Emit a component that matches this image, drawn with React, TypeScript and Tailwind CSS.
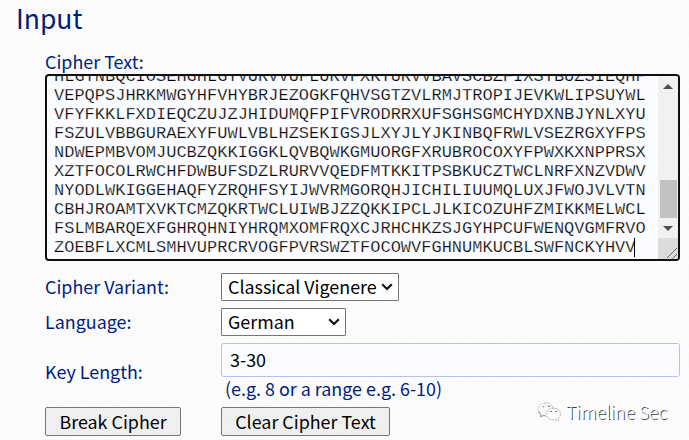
import React from "react";

const CIPHER_LINES = [
  "HLGTNBQCIOSEHGHLGTVURVVUFLURVFXKTURVVBAVSCBZFIXSTBUZSIEQHF",
  "VEPQPSJHRKMWGYHFVHYBRJEZOGKFQHVSGTZVLRMJTROPIJEVKWLIPSUYWL",
  "VFYFKKLFXDIEQCZUJZJHIDUMQFPIFVRODRRXUFSGHSGMCHYDXNBJYNLXYU",
  "FSZULVBBGURAEXYFUWLVBLHZSEKIGSJLXYJLYJKINBQFRWLVSEZRGXYFPS",
  "NDWEPMBVOMJUCBZQKKIGGKLQVBQWKGMUORGFXRUBROCOXYFPWXKXNPPRSX",
  "XZTFOCOLRWCHFDWBUFSDZLRURVVQEDFMTKKITPSBKUCZTWCLNRFXNZVDWV",
  "NYODLWKIGGEHAQFYZRQHFSYIJWVRMGORQHJICHILIUUMQLUXJFWOJVLVTN",
  "CBHJROAMTXVKTCMZQKRTWCLUIWBJZZQKKIPCLJLKICOZUHFZMIKKMELWCL",
  "FSLMBARQEXFGHRQHNIYHRQMXOMFRQXCJRHCHKZSJGYHPCUFWENQVGMFRVO",
  "ZOEBFLXCMLSMHVUPRCRVOGFPVRSWZTFOCOWVFGHNUMKUCBLSWFNCKYHVV",
];

function Chevron() {
  return (
    <svg width="12" height="8" viewBox="0 0 12 8" fill="none" className="shrink-0">
      <path d="M1.2 1.3 6 6l4.8-4.7" stroke="#111" strokeWidth="2.2" />
    </svg>
  );
}

function SelectBox({ label, width }: { label: string; width: string }) {
  return (
    <div className={`flex h-7 items-center justify-between rounded-[1px] border border-[#767676] bg-white pr-[5px] pl-1.5 whitespace-nowrap text-black ${width}`}>
      <span className="pb-0.5">{label}</span>
      <Chevron />
    </div>
  );
}

function Scrollbar() {
  return (
    <div className="flex w-5 shrink-0 flex-col bg-[#f1f1f1]">
      <div className="flex h-[21px] items-center justify-center">
        <svg width="10" height="5" viewBox="0 0 10 5"><path d="M0 5 5 0l5 5z" fill="#505050" /></svg>
      </div>
      <div className="flex-1" />
      <div className="mr-px ml-0.5 h-[38px] bg-[#c1c1c1]" />
      <div className="flex h-5 items-center justify-center">
        <svg width="10" height="5" viewBox="0 0 10 5"><path d="M0 0h10L5 5z" fill="#505050" /></svg>
      </div>
      <div className="flex h-[21px] items-end justify-end bg-[#dcdcdc]">
        <svg width="12" height="12" viewBox="0 0 12 12" stroke="#666" fill="none">
          <path d="M1 11 11 1M6.5 11.5l4.5-4.5" />
        </svg>
      </div>
    </div>
  );
}

function Watermark() {
  return (
    <div className="flex items-center pb-[19px]">
      <svg width="25" height="21" viewBox="0 0 26 22" fill="none" stroke="#a0a0a0" strokeWidth="0.8">
        <path d="M9 1C4.500 1 1 4 1 7.800c0 2.200 1.200 4 3 5.200" strokeDasharray="1.500 1.200" />
        <path d="M1.500 10c.5 1.300 1.400 2.300 2.500 3l-.3 2.500 2.800-1.300 2.500.4" stroke="#666" />
        <path d="M9 1c4 0 7 2.200 7.800 5.300" strokeDasharray="1.500 1.200" />
        <path d="M17 6.500c4.300 0 7.500 2.700 7.500 6.200 0 2-1 3.600-2.700 4.700l.7 2.300-2.700-1.400c-.9.300-1.800.4-2.800.4-4.300 0-7.500-2.700-7.500-6s3.200-6.200 7.500-6.200z" fill="#fff" strokeDasharray="2.500 0.900" />
        <path d="M6 5h1M11.500 4l2 1M14 10h1.600M19 10h1.600" stroke="#444" strokeWidth="1" />
      </svg>
      <span className="ml-1 text-[17.5px] leading-6 font-light text-[#fafafa] [text-shadow:1px_1px_0_#444]">Timeline Sec</span>
    </div>
  );
}

export default function App() {
  return (
    <main className="h-[440px] w-[689px] overflow-hidden bg-[#fbfbfb] bg-[repeating-linear-gradient(35deg,#fafafa_0px,#fcfcfc_3px,#fcfcfc_5px,#fafafa_8px)] font-['Noto_Sans_CJK_SC',sans-serif] text-[17.9px] leading-6 text-[#001c7e]">
      <h1 className="h-[50px] pt-px pl-4 text-[26.5px] leading-[34px] font-normal">Input</h1>
      <div className="pr-[9px] pl-[45px]">
        <div className="h-6 leading-[22px]">Cipher Text:</div>
        <div className="flex h-[187px] overflow-hidden rounded-[4px] border-2 border-[#101010] bg-[#fbfcff]">
          <div className="-mt-[9px] flex-1 pl-[7px] font-['Liberation_Mono',monospace] text-[17px] leading-[19px] whitespace-pre text-black [-webkit-text-stroke:0.25px_#fbfcff]">
            {CIPHER_LINES.map((line, i) => (
              <div key={i} className="flex h-[19px]">
                {line}
                {i === CIPHER_LINES.length - 1 && <span className="-ml-0.5 h-[19px] w-px bg-black" />}
              </div>
            ))}
          </div>
          <Scrollbar />
        </div>

        <div className="mt-3 grid grid-cols-[176px_1fr] items-center gap-y-[7px]">
          <span className="pb-0.5">Cipher Variant:</span>
          <SelectBox label="Classical Vigenere" width="w-[178px]" />
          <span className="pb-0.5">Language:</span>
          <SelectBox label="German" width="w-[125px]" />
          <span className="pb-0.5">Key Length:</span>
          <div className="h-[57px]">
            <div className="flex h-[34px] items-center rounded-[3px] border border-[#b3c1ee] bg-[#fbfcff] pb-0.5 pl-2 text-black">3-30</div>
            <div className="pl-1 leading-[22px]">(e.g. 8 or a range e.g. 6-10)</div>
          </div>
          <div className="flex h-[29px] w-[136px] items-center justify-center rounded-[2px] border border-[#767676] bg-[#efefef] pb-0.5 text-black">Break Cipher</div>
          <div className="flex h-[29px] items-center justify-between pr-[13px]">
            <div className="flex h-[29px] w-[169px] items-center justify-center rounded-[2px] border border-[#767676] bg-[#efefef] pb-0.5 text-black">Clear Cipher Text</div>
            <Watermark />
          </div>
        </div>
      </div>
    </main>
  );
}
